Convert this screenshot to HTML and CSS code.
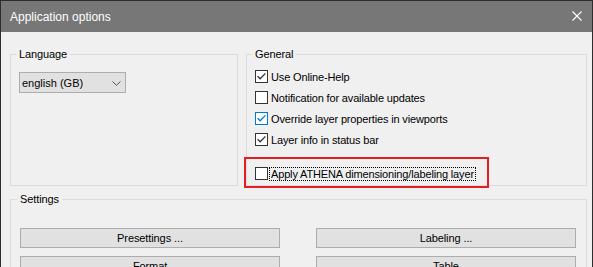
FILE: index.html
```html
<!doctype html>
<html lang="en">
<head>
  <meta charset="utf-8" />
  <title>Application options</title>
  <link rel="stylesheet" href="styles.css">
</head>
<body>
<div class="window">
  <div class="titlebar">
    <span class="title">Application options</span>
    <svg class="close" width="10" height="10" viewBox="0 0 10 10"><path d="M0.5 0.5L9.5 9.5M9.5 0.5L0.5 9.5" stroke="#fff" stroke-width="1.1" fill="none"/></svg>
  </div>

  <div class="content">
    <div class="top">
      <fieldset class="group">
        <legend>Language</legend>
        <div class="combo">
          <span>english (GB)</span>
          <svg width="9" height="5" viewBox="0 0 9 5"><path d="M0.5 0.5L4.5 4.3L8.5 0.5" stroke="#555" stroke-width="1" fill="none"/></svg>
        </div>
      </fieldset>

      <fieldset class="group general">
        <legend>General</legend>
        <div class="check first">
          <span class="box"><svg viewBox="0 0 11 11"><path d="M1.6 5.2L4.2 7.8L9.4 2.4" stroke="#333" stroke-width="1.3" fill="none"/></svg></span>
          <span class="lbl">Use Online-Help</span>
        </div>
        <div class="check">
          <span class="box"></span>
          <span class="lbl">Notification for available updates</span>
        </div>
        <div class="check hover">
          <span class="box"><svg viewBox="0 0 11 11"><path d="M1.6 5.2L4.2 7.8L9.4 2.4" stroke="#0078d7" stroke-width="1.3" fill="none"/></svg></span>
          <span class="lbl">Override layer properties in viewports</span>
        </div>
        <div class="check">
          <span class="box"><svg viewBox="0 0 11 11"><path d="M1.6 5.2L4.2 7.8L9.4 2.4" stroke="#333" stroke-width="1.3" fill="none"/></svg></span>
          <span class="lbl">Layer info in status bar</span>
        </div>
        <div class="check apply">
          <span class="box"></span>
          <span class="lbl focus">Apply ATHENA dimensioning/labeling layer</span>
        </div>
      </fieldset>
    </div>

    <fieldset class="group settings">
      <legend>Settings</legend>
      <div class="buttons">
        <button>Presettings ...</button>
        <button>Labeling ...</button>
        <button>Format</button>
        <button>Table</button>
      </div>
    </fieldset>
  </div>

  <div class="mark"></div>
</div>
</body>
</html>
```

FILE: styles.css
```css
*{box-sizing:border-box}
body{
  margin:0;
  font-family:"Liberation Sans",Arial,sans-serif;
  font-size:11px;
  color:#000;
  background:#f0f0f0;
}

.window{
  position:relative;
  width:593px;
  height:267px;
  overflow:hidden;
  background:#f0f0f0;
  border:1px solid #2d2d2d;
  border-bottom:none;
}

/* ===== TITLE ===== */
.titlebar{
  height:31px;
  background:#777;
  color:#fff;
  display:flex;
  align-items:center;
  justify-content:space-between;
  padding:0 10px 0 9px;
}
.title{font-size:12px;line-height:31px;padding-top:1px}
.close{display:block;margin-top:-1px}

/* ===== GROUPS ===== */
.content{padding:15px 5px 0 9px}
.top{
  display:grid;
  grid-template-columns:228px 341px;
  gap:8px;
}
.group{
  margin:0;
  padding:0 0 0 8px;
  border:1px solid #dcdcdc;
  min-width:0;
}
.group legend{
  margin-left:-3px;
  padding:0 3px;
  line-height:14px;
  letter-spacing:-0.1px;
}
.top .group{height:139px}

.combo{
  margin-top:11px;
  width:107px;
  height:21px;
  background:#e1e1e1;
  border:1px solid #adadad;
  display:flex;
  align-items:center;
  justify-content:space-between;
  padding:0 4px 0 2px;
}
.combo svg{display:block;margin-top:1px}

/* ===== CHECKBOXES ===== */
.check{
  display:flex;
  align-items:flex-start;
  height:21px;
}
.check.first{margin-top:6px}
.check.apply{margin-top:13px}
.box{
  width:13px;
  height:13px;
  margin-top:3px;
  margin-right:1px;
  border:1px solid #333;
  background:#fff;
  flex:none;
}
.box svg{display:block;width:11px;height:11px}
.hover .box{border-color:#0078d7}
.lbl{
  margin-top:3px;
  padding:0 1px;
  line-height:12px;
  border:1px solid transparent;
  letter-spacing:-0.15px;
  white-space:nowrap;
}
.lbl.focus{border:1px dotted #000}

/* ===== SETTINGS ===== */
.settings{
  margin-top:6px;
  height:120px;
  padding:0 10px 0 9px;
}
.buttons{
  margin-top:22px;
  display:grid;
  grid-template-columns:260px 260px;
  justify-content:space-between;
  row-gap:8px;
}
button{
  height:20px;
  margin:0;
  padding:0;
  background:#e1e1e1;
  border:1px solid #adadad;
  border-radius:0;
  font:inherit;
  color:#000;
  letter-spacing:-0.1px;
}

/* red highlight drawn over the dialog */
.mark{
  position:absolute;
  left:243px;
  top:156px;
  width:245px;
  height:31px;
  border:2px solid #e31e24;
}
```
